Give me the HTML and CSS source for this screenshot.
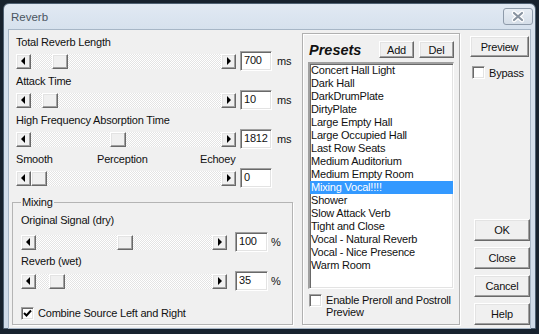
FILE: index.html
```html
<!DOCTYPE html>
<html>
<head>
<meta charset="utf-8">
<link rel="stylesheet" href="styles.css">
</head>
<body>
<div class="window">
  <div class="titlebar">
    <span class="title">Reverb</span>
    <span class="close">
      <svg width="28" height="15" viewBox="0 0 28 15">
        <path d="M10 4 L18 11 M18 4 L10 11" stroke="#ffffff" stroke-width="4.5" stroke-linecap="round" fill="none"/>
        <path d="M10 4 L18 11 M18 4 L10 11" stroke="#8893a0" stroke-width="2.2" stroke-linecap="round" fill="none"/>
      </svg>
    </span>
  </div>
  <div class="client">
    <div class="left">
      <div class="param">
        <div class="label">Total Reverb Length</div>
        <div class="srow">
          <div class="scroll"><span class="sbtn raised"><i class="tri-l"></i></span><div class="track"><span class="thumb raised" style="margin-left:21px"></span></div><span class="sbtn raised"><i class="tri-r"></i></span></div>
          <div class="edit sunken">700</div><span class="unit">ms</span>
        </div>
      </div>
      <div class="param">
        <div class="label">Attack Time</div>
        <div class="srow">
          <div class="scroll"><span class="sbtn raised"><i class="tri-l"></i></span><div class="track"><span class="thumb raised" style="margin-left:11px"></span></div><span class="sbtn raised"><i class="tri-r"></i></span></div>
          <div class="edit sunken">10</div><span class="unit">ms</span>
        </div>
      </div>
      <div class="param">
        <div class="label">High Frequency Absorption Time</div>
        <div class="srow">
          <div class="scroll"><span class="sbtn raised"><i class="tri-l"></i></span><div class="track"><span class="thumb raised" style="margin-left:79px"></span></div><span class="sbtn raised"><i class="tri-r"></i></span></div>
          <div class="edit sunken">1812</div><span class="unit">ms</span>
        </div>
      </div>
      <div class="param">
        <div class="label three"><span>Smooth</span><span>Perception</span><span>Echoey</span></div>
        <div class="srow">
          <div class="scroll"><span class="sbtn raised"><i class="tri-l"></i></span><div class="track"><span class="thumb raised" style="margin-left:0px"></span></div><span class="sbtn raised"><i class="tri-r"></i></span></div>
          <div class="edit sunken">0</div>
        </div>
      </div>
      <fieldset class="mixing">
        <legend>Mixing</legend>
        <div class="label">Original Signal (dry)</div>
        <div class="srow g1">
          <div class="scroll"><span class="sbtn raised"><i class="tri-l"></i></span><div class="track"><span class="thumb raised" style="margin-left:81px"></span></div><span class="sbtn raised"><i class="tri-r"></i></span></div>
          <div class="edit sunken">100</div><span class="unit">%</span>
        </div>
        <div class="label l2">Reverb (wet)</div>
        <div class="srow g2">
          <div class="scroll"><span class="sbtn raised"><i class="tri-l"></i></span><div class="track"><span class="thumb raised" style="margin-left:13px"></span></div><span class="sbtn raised"><i class="tri-r"></i></span></div>
          <div class="edit sunken">35</div><span class="unit">%</span>
        </div>
        <div class="check combine">
          <span class="cb sunken"><svg width="9" height="9" viewBox="0 0 9 9"><path d="M1 4 L3.5 6.5 L8 1.5" stroke="#000" stroke-width="2" fill="none"/></svg></span>
          <span class="ctext">Combine Source Left and Right</span>
        </div>
      </fieldset>
    </div>

    <div class="presets">
      <div class="phead">
        <span class="ptitle">Presets</span>
        <span class="btn raised small">Add</span>
        <span class="btn raised small">Del</span>
      </div>
      <div class="list sunken">
        <div class="item">Concert Hall Light</div>
        <div class="item">Dark Hall</div>
        <div class="item">DarkDrumPlate</div>
        <div class="item">DirtyPlate</div>
        <div class="item">Large Empty Hall</div>
        <div class="item">Large Occupied Hall</div>
        <div class="item">Last Row Seats</div>
        <div class="item">Medium Auditorium</div>
        <div class="item">Medium Empty Room</div>
        <div class="item sel">Mixing Vocal!!!!</div>
        <div class="item">Shower</div>
        <div class="item">Slow Attack Verb</div>
        <div class="item">Tight and Close</div>
        <div class="item">Vocal - Natural Reverb</div>
        <div class="item">Vocal - Nice Presence</div>
        <div class="item">Warm Room</div>
      </div>
      <div class="check preroll">
        <span class="cb sunken"></span>
        <span class="ctext wrap">Enable Preroll and Postroll Preview</span>
      </div>
    </div>

    <div class="actions">
      <span class="btn raised preview">Preview</span>
      <div class="check bypass">
        <span class="cb sunken"></span>
        <span class="ctext">Bypass</span>
      </div>
      <span class="btn raised act first">OK</span>
      <span class="btn raised act">Close</span>
      <span class="btn raised act">Cancel</span>
      <span class="btn raised act">Help</span>
    </div>
  </div>
</div>
</body>
</html>
```

FILE: styles.css
```css
* { box-sizing: border-box; }
html, body { margin: 0; }
body {
  background: #17222e;
  width: 539px;
  height: 334px;
  overflow: hidden;
  padding: 3px;
  font-family: "Liberation Sans", Arial, sans-serif;
  font-size: 11px;
  letter-spacing: -0.2px;
  color: #111;
}
.window {
  width: 533px;
  height: 326px;
  background: linear-gradient(#e1e9f3 0, #d6e1ed 26px, #cfdbe9 100%);
  border: 1px solid #4f6173;
  border-radius: 6px 6px 0 0;
  display: flex;
  flex-direction: column;
}
.titlebar {
  height: 25px;
  flex: none;
  display: flex;
  align-items: center;
  padding-left: 7px;
}
.title { color: #4a5561; font-size: 11.5px; letter-spacing: 0; }
.close {
  margin-left: auto;
  margin-right: 2px;
  align-self: flex-start;
  margin-top: 4px;
  width: 30px;
  height: 17px;
  border: 1px solid #8e9baa;
  border-radius: 3px;
  background: linear-gradient(#e7edf4, #d5dee8);
  display: flex;
}
.client {
  flex: 1;
  margin: 0 4px 2px 4px;
  background: #f0f0f0;
  border: 1px solid #a7b6c6;
  display: flex;
  padding: 0 0 3px 3px;
}
.left {
  width: 281px;
  padding-top: 5px;
  display: flex;
  flex-direction: column;
}
.label { height: 14px; line-height: 14px; white-space: nowrap; }
.label.three { display: grid; grid-template-columns: 81px 103px auto; padding-left: 4px; }
.param .label { padding-left: 4px; }
.param { margin-bottom: 3px; }
.srow {
  display: flex;
  align-items: center;
  height: 20px;
  margin-top: 2px;
  padding-left: 4px;
}
.scroll { display: flex; width: 220px; height: 15px; }
.raised {
  background: #f0f0f0;
  border: 1px solid;
  border-color: #ffffff #696969 #696969 #ffffff;
  box-shadow: inset -1px -1px #a0a0a0, inset 1px 1px #e3e3e3;
}
.sunken {
  background: #fff;
  border: 1px solid;
  border-color: #a0a0a0 #ffffff #ffffff #a0a0a0;
  box-shadow: inset 1px 1px #696969, inset -1px -1px #e3e3e3;
}
.sbtn {
  width: 15px;
  height: 15px;
  flex: none;
  display: flex;
  align-items: center;
  justify-content: center;
}
.tri-l, .tri-r { width: 0; height: 0; border-top: 4px solid transparent; border-bottom: 4px solid transparent; }
.tri-l { border-right: 4px solid #000; margin-left: -1px; }
.tri-r { border-left: 4px solid #000; margin-left: 1px; }
.track {
  flex: 1;
  display: flex;
  background: repeating-conic-gradient(#ffffff 0 25%, #e4e4e4 0 50%) 0 0 / 2px 2px;
}
.thumb { width: 16px; height: 15px; flex: none; }
.edit {
  width: 32px;
  height: 20px;
  margin-left: 4px;
  padding-left: 3px;
  line-height: 17px;
  flex: none;
}
.unit { margin-left: 5px; }

.mixing {
  margin: 5px 0 0 0;
  padding: 5px 8px 4px 8px;
  border: 1px solid #b4b4b4;
  box-shadow: 1px 1px 0 #fff;
  min-width: 0;
  flex: 1;
}
.mixing legend { padding: 0 1px; line-height: 12px; height: 12px; }
.mixing .srow { padding-left: 0; }
.mixing .srow.g1 { margin-top: 5px; }
.mixing .label.l2 { margin-top: 2px; }
.mixing .srow.g2 { margin-top: 3px; }
.mixing .scroll { width: 206px; }
.mixing .edit { margin-left: 8px; width: 33px; }
.mixing .unit { margin-left: 3px; }

.check { display: flex; align-items: center; }
.cb {
  width: 13px;
  height: 13px;
  flex: none;
  display: flex;
  align-items: center;
  justify-content: center;
}
.combine { margin-top: 15px; height: 14px; }
.combine .ctext { margin-left: 4px; }

.presets {
  margin-top: 3px;
  margin-left: 9px;
  width: 158px;
  border: 1px solid #b0b0b0;
  box-shadow: inset 1px 1px #fff, 1px 1px 0 #fff;
  padding: 7px 5px 0 5px;
  display: flex;
  flex-direction: column;
}
.phead { display: flex; align-items: center; height: 17px; }
.ptitle {
  font-size: 14.5px;
  font-weight: bold;
  font-style: italic;
  letter-spacing: 0;
  padding-left: 1px;
  margin-right: auto;
}
.btn {
  display: flex;
  align-items: center;
  justify-content: center;
  flex: none;
}
.btn.small { width: 35px; height: 17px; }
.btn.small + .btn.small { margin-left: 5px; }
.list {
  margin-top: 4px;
  height: 227px;
  border-width: 2px 1px 1px 2px;
  padding: 0;
  flex: none;
}
.item { height: 13px; line-height: 13px; padding-left: 1px; white-space: nowrap; }
.item.sel { background: #3399ff; color: #fff; }
.preroll { margin-top: 5px; align-items: flex-start; }
.preroll .cb { margin-left: 1px; }
.ctext.wrap { width: 128px; margin-left: 4px; line-height: 12px; }

.actions {
  margin-top: 6px;
  margin-left: 10px;
  width: 60px;
  display: flex;
  flex-direction: column;
}
.preview { width: 59px; height: 21px; }
.bypass { margin-top: 9px; margin-left: 2px; height: 13px; }
.bypass .ctext { margin-left: 4px; }
.act { width: 56px; height: 22px; margin-left: 4px; margin-top: 6px; }
.act.first { margin-top: auto; }
```
